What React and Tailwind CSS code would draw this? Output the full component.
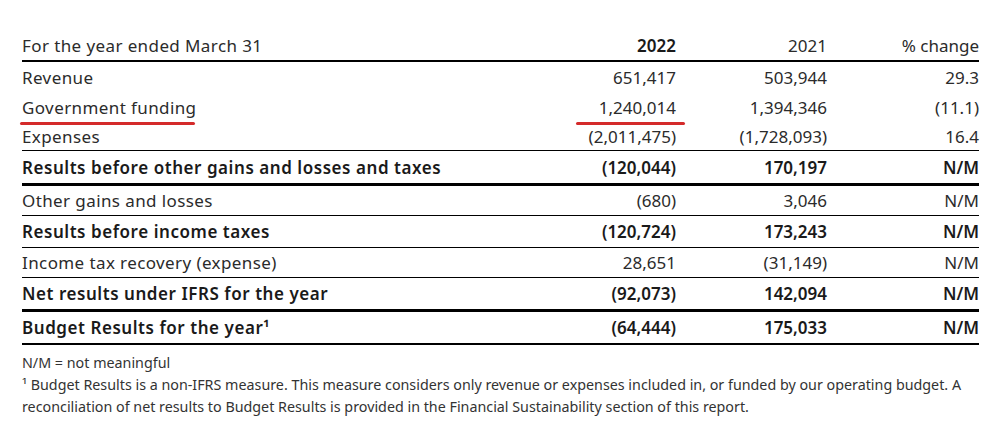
import React from 'react';

const rows = [
  { label: 'Revenue', a: '651,417', b: '503,944', c: '29.3', h: 'h-[30px]', rule: '' },
  { label: 'Government funding', a: '1,240,014', b: '1,394,346', c: '(11.1)', h: 'h-[30px]', rule: '', mark: true },
  { label: 'Expenses', a: '(2,011,475)', b: '(1,728,093)', c: '16.4', h: 'h-[29px]', rule: 'border-b border-black' },
  { label: 'Results before other gains and losses and taxes', a: '(120,044)', b: '170,197', c: 'N/M', h: 'h-[35px]', rule: 'border-b-[3px] border-black', bold: true },
  { label: 'Other gains and losses', a: '(680)', b: '3,046', c: 'N/M', h: 'h-[30px]', rule: 'border-b border-black' },
  { label: 'Results before income taxes', a: '(120,724)', b: '173,243', c: 'N/M', h: 'h-[32px]', rule: 'border-b border-black', bold: true },
  { label: 'Income tax recovery (expense)', a: '28,651', b: '(31,149)', c: 'N/M', h: 'h-[30px]', rule: 'border-b border-black' },
  { label: 'Net results under IFRS for the year', a: '(92,073)', b: '142,094', c: 'N/M', h: 'h-[34px]', rule: 'border-b-[3px] border-black', bold: true },
  { label: 'Budget Results for the year\u00b9', a: '(64,444)', b: '175,033', c: 'N/M', h: 'h-[33px]', rule: 'border-b-2 border-black', bold: true },
];

function Row({ r }) {
  const weight = r.bold ? 'font-semibold text-[#1a1a1a]' : 'font-normal text-[#2b2b2b]';
  return (
    <div className={`grid grid-cols-[1fr_150px_151px_152px] items-center ${r.h} ${r.rule} ${weight}`}>
      <div className={`relative ${r.bold ? 'tracking-[0.55px]' : 'tracking-[0.4px]'}`}>
        {r.label}
        {r.mark && <span className="absolute left-[-2px] top-[23px] h-[3px] w-[175px] rounded-full bg-[#d42a2a]" />}
      </div>
      <div className="relative text-right">
        {r.a}
        {r.mark && <span className="absolute right-[-9px] top-[23px] h-[3px] w-[109px] rounded-full bg-[#d42a2a]" />}
      </div>
      <div className="text-right">{r.b}</div>
      <div className="text-right">{r.c}</div>
    </div>
  );
}

export default function App() {
  return (
    <div className="h-[426px] w-[1002px] bg-white px-[22px] pt-[30px] font-['Noto_Sans',sans-serif] text-[17px] leading-none">
      <div className="w-[957px]">
        <div className="grid h-[32px] grid-cols-[1fr_150px_151px_152px] items-center border-b-2 border-black text-[#2b2b2b]">
          <div className="tracking-[0.4px]">For the year ended March 31</div>
          <div className="text-right font-semibold text-[#1a1a1a]">2022</div>
          <div className="text-right">2021</div>
          <div className="text-right">% change</div>
        </div>
        {rows.map((r) => (
          <Row key={r.label} r={r} />
        ))}
      </div>
      <div className="mt-[7px] text-[14.3px] leading-[22px] text-[#333]">
        <p>N/M = not meaningful</p>
        <p>{'\u00b9'} Budget Results is a non-IFRS measure. This measure considers only revenue or expenses included in, or funded by our operating budget. A</p>
        <p>reconciliation of net results to Budget Results is provided in the Financial Sustainability section of this report.</p>
      </div>
    </div>
  );
}
